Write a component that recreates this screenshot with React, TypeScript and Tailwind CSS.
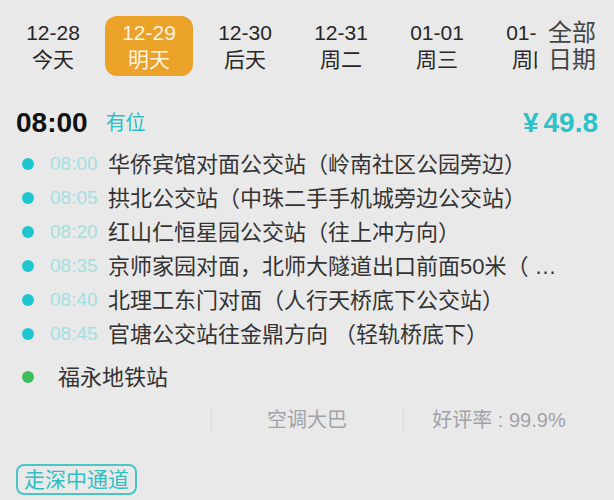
import React from "react";

const dates = [
  { date: "12-28", label: "今天" },
  { date: "12-29", label: "明天", active: true },
  { date: "12-30", label: "后天" },
  { date: "12-31", label: "周二" },
  { date: "01-01", label: "周三" },
  { date: "01-02", label: "周四" },
];

const stops = [
  { time: "08:00", name: "华侨宾馆对面公交站（岭南社区公园旁边）" },
  { time: "08:05", name: "拱北公交站（中珠二手手机城旁边公交站）" },
  { time: "08:20", name: "红山仁恒星园公交站（往上冲方向）" },
  { time: "08:35", name: "京师家园对面，北师大隧道出口前面50米（ …" },
  { time: "08:40", name: "北理工东门对面（人行天桥底下公交站）" },
  { time: "08:45", name: "官塘公交站往金鼎方向 （轻轨桥底下）" },
];

export default function App() {
  return (
    <div
      className="w-[614px] h-[500px] overflow-hidden bg-[#e9e9e9] text-[#2a2a2a]"
      style={{ fontFamily: '"Liberation Sans", "Noto Sans CJK SC", sans-serif' }}
    >
      {/* Date strip */}
      <div className="flex h-[92px] pt-[16px]">
        <div className="flex w-[537px] shrink-0 overflow-hidden pl-[5px]">
          {dates.map((d) => (
            <div key={d.date} className="w-[96px] shrink-0 flex justify-center">
              <div
                className={`w-[88px] h-[60px] rounded-[12px] flex flex-col items-center justify-center text-[21px] leading-[27px] ${
                  d.active ? "bg-[#eba229] text-[#fdf3e0]" : "text-[#262626]"
                }`}
              >
                <span>{d.date}</span>
                <span>{d.label}</span>
              </div>
            </div>
          ))}
        </div>
        <div className="flex-1 flex flex-col pl-[11px] pt-[3px] text-[24px] leading-[27px] text-[#444]">
          <span>全部</span>
          <span>日期</span>
        </div>
      </div>

      {/* Header row */}
      <div className="flex items-center h-[40px] mt-[11px] px-[16px]">
        <span className="text-[28px] font-bold text-[#111]">08:00</span>
        <span className="ml-[18px] text-[20px] text-[#2dbfc4]">有位</span>
        <span className="ml-auto text-[28px] font-bold text-[#2dc2c8]">
          <span className="mr-[5px]">¥</span>49.8
        </span>
      </div>

      {/* Stops */}
      <div className="mt-[4px]">
        {stops.map((s) => (
          <div key={s.time} className="flex items-center h-[34px]">
            <span className="ml-[22px] w-[12px] h-[12px] rounded-full bg-[#1fc6cf] shrink-0" />
            <span className="ml-[16px] w-[52px] shrink-0 text-[19px] text-[#a3e0e3]">{s.time}</span>
            <span className="ml-[6px] text-[22px] text-[#333] whitespace-nowrap">{s.name}</span>
          </div>
        ))}
        <div className="flex items-center h-[34px] mt-[9px]">
          <span className="ml-[22px] w-[12px] h-[12px] rounded-full bg-[#3dbd5c] shrink-0" />
          <span className="ml-[24px] text-[22px] text-[#333]">福永地铁站</span>
        </div>
      </div>

      {/* Info row */}
      <div className="grid grid-cols-3 w-[576px] ml-[19px] mt-[10px] h-[32px] text-[20px] text-[#a2a2aa]">
        <div />
        <div className="relative flex items-center justify-center">
          <span className="absolute left-0 top-[4px] h-[24px] w-px bg-[#dcdcdc]" />
          空调大巴
        </div>
        <div className="relative flex items-center justify-center">
          <span className="absolute left-0 top-[4px] h-[24px] w-px bg-[#dcdcdc]" />
          好评率 : 99.9%
        </div>
      </div>

      {/* Tag */}
      <div className="mt-[28px] ml-[16px]">
        <span className="inline-flex items-center h-[31px] px-[6px] rounded-[8px] border-[2px] border-[#48c6c6] text-[21px] text-[#2fbfc2]">
          走深中通道
        </span>
      </div>
    </div>
  );
}
